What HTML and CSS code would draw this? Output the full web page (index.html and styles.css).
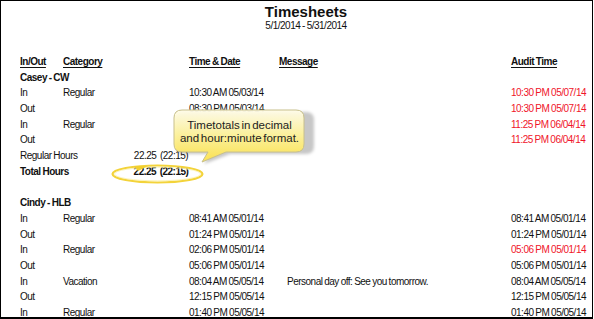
FILE: index.html
```html
<!DOCTYPE html>
<html>
<head>
<meta charset="utf-8">
<link rel="stylesheet" href="styles.css">
</head>
<body>
<div class="page">
  <div class="head">
    <div class="title">Timesheets</div>
    <div class="range">5/1/2014 - 5/31/2014</div>
  </div>
  <div class="table">
    <div class="row hdr">
      <span>In/Out</span><span>Category</span><span></span><span>Time &amp; Date</span><span>Message</span><span>Audit Time</span>
    </div>
    <div class="row name"><span>Casey - CW</span></div>
    <div class="row"><span>In</span><span>Regular</span><span></span><span>10:30 AM 05/03/14</span><span class="msg"></span><span class="red">10:30 PM 05/07/14</span></div>
    <div class="row"><span>Out</span><span></span><span></span><span>08:30 PM 05/03/14</span><span class="msg"></span><span class="red">10:30 PM 05/07/14</span></div>
    <div class="row"><span>In</span><span>Regular</span><span></span><span></span><span class="msg"></span><span class="red">11:25 PM 06/04/14</span></div>
    <div class="row"><span>Out</span><span></span><span></span><span></span><span class="msg"></span><span class="red">11:25 PM 06/04/14</span></div>
    <div class="row sum"><span class="lbl">Regular Hours</span><span class="val">22.25&nbsp;&nbsp;(22:15)</span></div>
    <div class="row sum total"><span class="lbl">Total Hours</span><span class="val">22.25&nbsp;&nbsp;(22:15)</span></div>
    <div class="row blank"></div>
    <div class="row name"><span>Cindy - HLB</span></div>
    <div class="row"><span>In</span><span>Regular</span><span></span><span>08:41 AM 05/01/14</span><span class="msg"></span><span>08:41 AM 05/01/14</span></div>
    <div class="row"><span>Out</span><span></span><span></span><span>01:24 PM 05/01/14</span><span class="msg"></span><span>01:24 PM 05/01/14</span></div>
    <div class="row"><span>In</span><span>Regular</span><span></span><span>02:06 PM 05/01/14</span><span class="msg"></span><span class="red">05:06 PM 05/01/14</span></div>
    <div class="row"><span>Out</span><span></span><span></span><span>05:06 PM 05/01/14</span><span class="msg"></span><span>05:06 PM 05/01/14</span></div>
    <div class="row"><span>In</span><span>Vacation</span><span></span><span>08:04 AM 05/05/14</span><span class="msg">Personal day off: See you tomorrow.</span><span>08:04 AM 05/05/14</span></div>
    <div class="row"><span>Out</span><span></span><span></span><span>12:15 PM 05/05/14</span><span class="msg"></span><span>12:15 PM 05/05/14</span></div>
    <div class="row"><span>In</span><span>Regular</span><span></span><span>01:40 PM 05/05/14</span><span class="msg"></span><span>01:40 PM 05/05/14</span></div>
  </div>

  <svg class="overlay" width="594" height="319" viewBox="0 0 594 319" xmlns="http://www.w3.org/2000/svg">
    <defs>
      <linearGradient id="bub" x1="0" y1="0" x2="0" y2="1">
        <stop offset="0" stop-color="#fffcea"/>
        <stop offset="0.45" stop-color="#fef39e"/>
        <stop offset="1" stop-color="#fde24a"/>
      </linearGradient>
      <filter id="sh" x="-10%" y="-10%" width="130%" height="140%">
        <feGaussianBlur stdDeviation="1.5"/>
      </filter>
    </defs>
    <path d="M184 112 H306 Q314 112 314 120 V146 Q314 154 306 154 H230 L204 164 L210 154 H184 Q176 154 176 146 V120 Q176 112 184 112 Z" fill="#000" fill-opacity="0.22" filter="url(#sh)"/>
    <path d="M182 110 H296 Q304 110 304 118 V144 Q304 152 296 152 H226 L202 162 L208 152 H182 Q174 152 174 144 V118 Q174 110 182 110 Z" fill="url(#bub)" fill-opacity="0.95" stroke="#c8c08c" stroke-width="1"/>
    <ellipse cx="157.5" cy="174" rx="45" ry="8.5" fill="none" stroke="#f3d33a" stroke-width="2.2"/>
    <ellipse cx="157.5" cy="174" rx="43" ry="6.8" fill="none" stroke="#fbf0a8" stroke-width="0.8"/>
    <path d="M134 166 L148 166 L138 171 Z" fill="#f1cf2e"/>
  </svg>
  <div class="callout">Timetotals in decimal<br>and hour:minute format.</div>
</div>
</body>
</html>
```
FILE: styles.css
```css
html, body {
  margin: 0;
  padding: 0;
  background: #fff;
}
.page {
  position: relative;
  box-sizing: border-box;
  width: 593px;
  height: 319px;
  border: 1px solid #000;
  border-bottom-width: 2px;
  overflow: hidden;
  font-family: "Liberation Sans", Arial, sans-serif;
  font-size: 10px;
  color: #111;
  letter-spacing: -0.5px;
  word-spacing: -0.5px;
}
.head {
  padding: 3px 0 0 19px;
  text-align: center;
}
.title {
  font-size: 15px;
  font-weight: bold;
  line-height: 16px;
  letter-spacing: 0;
  word-spacing: 0;
}
.range {
  line-height: 11px;
}
.table {
  margin-top: 23px;
  padding-left: 19px;
}
.row {
  display: grid;
  grid-template-columns: 43px 70px 56px 90px 232px 1fr;
  height: 15.7px;
  line-height: 15.7px;
  white-space: nowrap;
}
.hdr span {
  font-weight: bold;
  text-decoration: underline;
  text-underline-offset: 2px;
}
.name span {
  grid-column: 1 / span 6;
  font-weight: bold;
}
.msg {
  padding-left: 8px;
}
.red {
  color: #f0152a;
}
.sum .lbl {
  grid-column: 1 / span 2;
}
.sum .val {
  grid-column: 3;
  display: flex;
  justify-content: center;
}
.total {
  font-weight: bold;
}
.overlay {
  position: absolute;
  left: -1px;
  top: -1px;
  pointer-events: none;
}
.callout {
  position: absolute;
  left: 173px;
  top: 118px;
  width: 131px;
  text-align: center;
  font-size: 11.5px;
  line-height: 12.5px;
  letter-spacing: 0;
  word-spacing: -1.5px;
  color: #222;
}
```
